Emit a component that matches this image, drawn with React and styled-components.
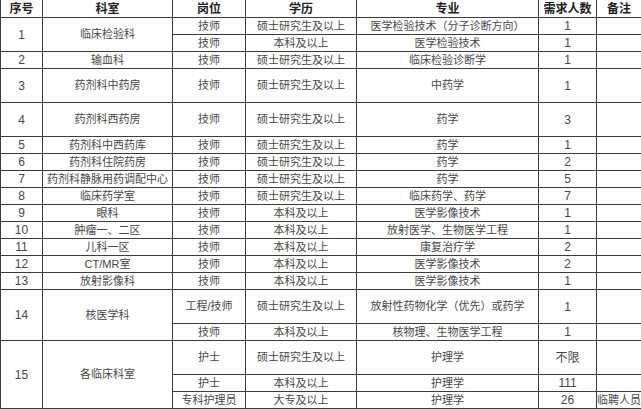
import React from "react";
import styled, { createGlobalStyle } from "styled-components";

const GlobalStyle = createGlobalStyle`
  html, body {
    margin: 0;
    padding: 0;
    background: #fff;
    overflow: hidden;
  }
`;

const LINE = "#3c3c3c";

const Grid = styled.div`
  display: grid;
  grid-template-columns: 42px 130px 73px 111px 182px 58px 45px;
  grid-template-rows:
    18px 17px 17px 17px 34px 34px
    repeat(9, 17px)
    34px 17px 34px 17px 17px;
  width: 642px;
  border-left: 1px solid ${LINE};
  font-family: "Liberation Sans", "Noto Sans CJK SC", sans-serif;
  font-size: 11px;
  color: #474747;
`;

const Cell = styled.div`
  grid-row: span ${(p) => p.$rows || 1};
  display: flex;
  align-items: center;
  justify-content: center;
  box-sizing: border-box;
  border-right: 1px solid ${LINE};
  border-bottom: 1px solid ${LINE};
  white-space: nowrap;
  overflow: hidden;
  line-height: 1;
  font-size: ${(p) => (p.$num ? "12px" : "11px")};
`;

const HeadCell = styled(Cell)`
  font-size: 12px;
  font-weight: 700;
  color: #222;
`;

const headers = ["序号", "科室", "岗位", "学历", "专业", "需求人数", "备注"];

// each row: [序号, 科室, 岗位, 学历, 专业, 人数, 备注]; null = covered by a span above
const rows = [
  { cells: ["1", "临床检验科", "技师", "硕士研究生及以上", "医学检验技术（分子诊断方向）", "1", ""], span: 2 },
  { cells: [null, null, "技师", "本科及以上", "医学检验技术", "1", ""] },
  { cells: ["2", "输血科", "技师", "硕士研究生及以上", "临床检验诊断学", "1", ""] },
  { cells: ["3", "药剂科中药房", "技师", "硕士研究生及以上", "中药学", "1", ""] },
  { cells: ["4", "药剂科西药房", "技师", "硕士研究生及以上", "药学", "3", ""] },
  { cells: ["5", "药剂科中西药库", "技师", "硕士研究生及以上", "药学", "1", ""] },
  { cells: ["6", "药剂科住院药房", "技师", "硕士研究生及以上", "药学", "2", ""] },
  { cells: ["7", "药剂科静脉用药调配中心", "技师", "硕士研究生及以上", "药学", "5", ""] },
  { cells: ["8", "临床药学室", "技师", "硕士研究生及以上", "临床药学、药学", "7", ""] },
  { cells: ["9", "眼科", "技师", "本科及以上", "医学影像技术", "1", ""] },
  { cells: ["10", "肿瘤一、二区", "技师", "本科及以上", "放射医学、生物医学工程", "1", ""] },
  { cells: ["11", "儿科一区", "技师", "本科及以上", "康复治疗学", "2", ""] },
  { cells: ["12", "CT/MR室", "技师", "本科及以上", "医学影像技术", "2", ""] },
  { cells: ["13", "放射影像科", "技师", "本科及以上", "医学影像技术", "1", ""] },
  { cells: ["14", "核医学科", "工程/技师", "硕士研究生及以上", "放射性药物化学（优先）或药学", "1", ""], span: 2 },
  { cells: [null, null, "技师", "本科及以上", "核物理、生物医学工程", "1", ""] },
  { cells: ["15", "各临床科室", "护士", "硕士研究生及以上", "护理学", "不限", ""], span: 3 },
  { cells: [null, null, "护士", "本科及以上", "护理学", "111", ""] },
  { cells: [null, null, "专科护理员", "大专及以上", "护理学", "26", "临聘人员"] },
];

const isNum = (col) => col === 0 || col === 5;

export default function App() {
  return (
    <>
      <GlobalStyle />
      <Grid>
        {headers.map((h) => (
          <HeadCell key={h}>{h}</HeadCell>
        ))}
        {rows.map((row, r) =>
          row.cells.map((text, c) => {
            if (text === null) return null;
            const rowsSpan = c < 2 && row.span ? row.span : 1;
            return (
              <Cell key={`${r}-${c}`} $rows={rowsSpan} $num={isNum(c)}>
                {text}
              </Cell>
            );
          })
        )}
      </Grid>
    </>
  );
}
